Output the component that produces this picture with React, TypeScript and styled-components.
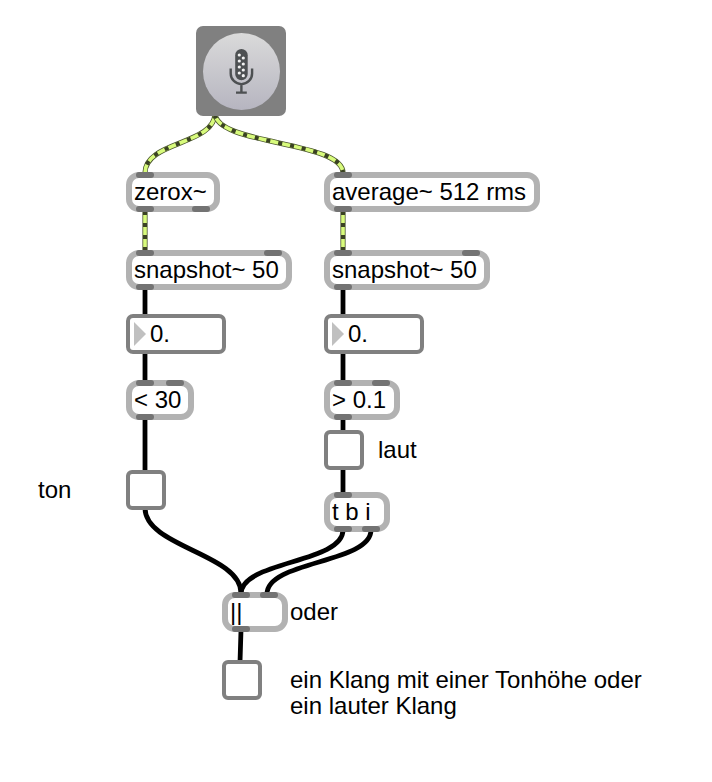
import React from "react";
import styled, { createGlobalStyle } from "styled-components";

const GlobalStyle = createGlobalStyle`
  * { box-sizing: border-box; }
  body { margin: 0; background: #fff; }
`;

const Patcher = styled.main`
  position: relative;
  width: 712px;
  height: 782px;
  overflow: hidden;
  background: #fff;
  color: #000;
  font: 24px/26px "Liberation Sans", Arial, Helvetica, sans-serif;
`;

const Cords = styled.svg`
  position: absolute;
  inset: 0;
`;

type Place = { $x: number; $y: number };

/* Every patcher node sits at its own spot on the free canvas. */
const Node = styled.div<Place>`
  position: absolute;
  left: ${(p) => p.$x}px;
  top: ${(p) => p.$y}px;
`;

const ObjectFrame = styled(Node)<{ $w: number }>`
  width: ${(p) => p.$w}px;
  height: 40px;
  padding: 1px 0 0 2px;
  border: 6px solid #b2b2b2;
  border-radius: 13px;
  background: #fff;
  white-space: nowrap;
`;

/* Inlets and outlets overlap the frame's border. */
const Port = styled.i<{ $x: number; $bottom?: boolean }>`
  position: absolute;
  left: ${(p) => p.$x - 6}px;
  top: ${(p) => (p.$bottom ? 28 : -6)}px;
  width: 18px;
  height: 6px;
  border-radius: 3px;
  background: #737373;
`;

const NumberFrame = styled(Node)`
  display: flex;
  align-items: center;
  gap: 4px;
  width: 100px;
  height: 40px;
  padding-left: 4px;
  border: 4px solid #808080;
  border-radius: 7px;
  background: #fff;
`;

const Arrow = styled.span`
  border: solid transparent;
  border-width: 12px 0 12px 12px;
  border-left-color: #c0c0c0;
`;

const Toggle = styled(Node)`
  width: 40px;
  height: 40px;
  border: 4px solid #808080;
  border-radius: 6px;
  background: #fff;
`;

const Comment = styled(Node)`
  white-space: nowrap;
`;

const MicButton = styled(Node)`
  display: flex;
  width: 90px;
  height: 90px;
  align-items: center;
  justify-content: center;
  border-radius: 7px;
  background: #808080;
`;

const MicDisc = styled.div`
  width: 77px;
  height: 77px;
  border-radius: 50%;
  background: linear-gradient(#dadada, #b6b5c0);
`;

const micDots: [number, number][] = [
  [36.3, 22], [40.3, 25], [36.3, 28], [40.3, 31], [36.3, 34], [40.3, 37], [36.3, 40], [40.3, 42.7],
];

const MicIcon = () => (
  <svg width="77" height="77" viewBox="0 0 77 77">
    <rect x="32.2" y="15.9" width="12.5" height="31.4" rx="6.25" fill="#4d5052" />
    {micDots.map(([x, y]) => (
      <circle key={y} cx={x} cy={y} r="1.6" fill="#f2f2f2" />
    ))}
    <path
      d="M27.7 35.5v4.9a10.7 10.7 0 0 0 21.4 0v-4.9M38.4 51v8M33 59.6h10.8"
      fill="none"
      stroke="#4d5052"
      strokeWidth="2.4"
    />
  </svg>
);

type BoxProps = { x: number; y: number; w: number; text: string; inlets?: number[]; outlets?: number[] };

const ObjectBox = ({ x, y, w, text, inlets = [10], outlets = [10] }: BoxProps) => (
  <ObjectFrame $x={x} $y={y} $w={w}>
    {inlets.map((p) => <Port key={"i" + p} $x={p} />)}
    {outlets.map((p) => <Port key={"o" + p} $x={p} $bottom />)}
    {text}
  </ObjectFrame>
);

const NumberBox = ({ x, y }: { x: number; y: number }) => (
  <NumberFrame $x={x} $y={y}>
    <Arrow />
    <span>0.</span>
  </NumberFrame>
);

/* A cord leaves and enters vertically; slack sets how far it bends. */
const cord = (x1: number, y1: number, x2: number, y2: number, slack = 0.46) => {
  const bend = (y2 - y1) * slack;
  return x1 === x2 ? `M${x1} ${y1}V${y2}` : `M${x1} ${y1}C${x1} ${y1 + bend} ${x2} ${y2 - bend} ${x2} ${y2}`;
};

const signalCords = [
  { d: cord(215, 113, 145, 173, 0.54), offset: -1.5 },
  { d: cord(215, 113, 343, 173, 0.54), offset: -1.5 },
  { d: cord(145, 211, 145, 251), offset: 0 },
  { d: cord(343, 211, 343, 251), offset: 0 },
];

const controlCords = [
  cord(145, 288, 145, 316),
  cord(145, 352, 145, 382),
  cord(145, 418, 145, 472),
  cord(343, 288, 343, 316),
  cord(343, 352, 343, 382),
  cord(343, 418, 343, 432),
  cord(343, 468, 343, 494),
  cord(145, 508, 241, 593),
  cord(343, 530, 241, 594, 0.52),
  cord(371, 530, 267, 594, 0.52),
  "M241 630L240 662",
];

export default function App() {
  return (
    <>
      <GlobalStyle />
      <Patcher>
        <Cords width="712" height="782" fill="none">
          {signalCords.map(({ d, offset }) => (
            <g key={d}>
              <path d={d} stroke="#4c572f" strokeWidth="5.2" />
              <path d={d} stroke="#d8fb7c" strokeWidth="3.6" />
              <path d={d} stroke="#3a4223" strokeWidth="4" strokeDasharray="4 8" strokeDashoffset={offset} />
            </g>
          ))}
          {controlCords.map((d) => (
            <path key={d} d={d} stroke="#000" strokeWidth="4.8" />
          ))}
        </Cords>
        <MicButton $x={196} $y={26}>
          <MicDisc>
            <MicIcon />
          </MicDisc>
        </MicButton>
        <ObjectBox x={126} y={172} w={94} text="zerox~" outlets={[10, 66]} />
        <ObjectBox x={324} y={172} w={216} text="average~ 512 rms" />
        <ObjectBox x={126} y={250} w={166} text="snapshot~ 50" inlets={[10, 138]} />
        <ObjectBox x={324} y={250} w={166} text="snapshot~ 50" inlets={[10, 138]} />
        <NumberBox x={126} y={314} />
        <NumberBox x={324} y={314} />
        <ObjectBox x={126} y={380} w={68} text="&lt; 30" inlets={[10, 40]} />
        <ObjectBox x={324} y={380} w={76} text="&gt; 0.1" inlets={[10, 48]} />
        <Toggle $x={324} $y={430} />
        <Toggle $x={126} $y={470} />
        <ObjectBox x={324} y={492} w={66} text="t b i" outlets={[10, 38]} />
        <ObjectBox x={222} y={592} w={66} text="||" inlets={[10, 38]} />
        <Toggle $x={222} $y={660} />
        <Comment $x={378} $y={437}>laut</Comment>
        <Comment $x={38} $y={477}>ton</Comment>
        <Comment $x={290} $y={599}>oder</Comment>
        <Comment $x={290} $y={667}>
          ein Klang mit einer Tonhöhe oder
          <br />
          ein lauter Klang
        </Comment>
      </Patcher>
    </>
  );
}
